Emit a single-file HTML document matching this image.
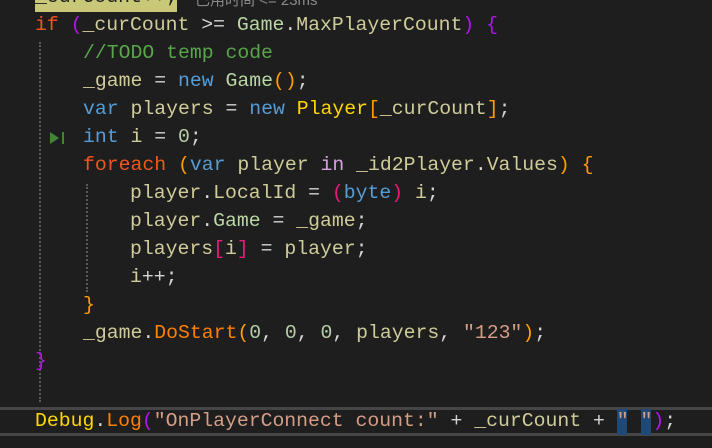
<!DOCTYPE html>
<html><head><meta charset="utf-8"><style>
html,body{margin:0;padding:0;background:#1e1e1e;width:712px;height:448px;overflow:hidden;position:relative}
.l{position:absolute;white-space:pre;font-family:"Liberation Mono",monospace;font-size:19.8px;line-height:28px;height:28px;color:#dcdcaa}
.id{color:#d0cc9a}.kw{color:#569cd6}.ctl{color:#f2551d}.ty{color:#b8d7a3}.cm{color:#57a64a}
.num{color:#b5cea8}.str{color:#d69d85}.cls{color:#ffd700}.fn{color:#ff8000}.pu{color:#b116e6}.or{color:#ff9d00}.pk{color:#e81a7a}.op{color:#d4d4d4}.pl{color:#d7a0e0}
.g{position:absolute;width:0;border-left:2px dotted #5a5a5a}
</style></head><body>
<div style="position:absolute;left:35px;top:0;width:142px;height:12px;background:#c8c878;overflow:hidden"><div class="l" style="left:0;top:-17px;color:#1e1e1e">_curCount++;</div></div>
<div style="position:absolute;left:195px;top:0;height:11px;width:140px;overflow:hidden"><div style="position:absolute;top:-11px;left:0;font-family:'Liberation Sans','Noto Sans CJK SC',sans-serif;font-size:15px;color:#8a8a8a;white-space:pre">已用时间 &lt;= 23ms</div></div>

<div class="g" style="left:39px;top:42px;height:360px"></div>
<div class="g" style="left:86px;top:184px;height:108px"></div>

<div class="l" style="left:35px;top:11px"><span class="ctl">if</span> <span class="pu">(</span><span class="id">_curCount</span> <span class="op">&gt;=</span> <span class="ty">Game</span><span class="op">.</span><span class="id">MaxPlayerCount</span><span class="pu">)</span> <span class="pu">{</span></div>
<div class="l" style="left:83px;top:39px"><span class="cm">//TODO temp code</span></div>
<div class="l" style="left:83px;top:67px"><span class="id">_game</span> <span class="op">=</span> <span class="kw">new</span> <span class="ty">Game</span><span class="or">()</span><span class="op">;</span></div>
<div class="l" style="left:83px;top:95px"><span class="kw">var</span> <span class="id">players</span> <span class="op">=</span> <span class="kw">new</span> <span class="cls">Player</span><span class="or">[</span><span class="id">_curCount</span><span class="or">]</span><span class="op">;</span></div>
<svg style="position:absolute;left:48px;top:130px" width="18" height="16"><polygon points="2,2 11,8 2,14" fill="#3d8a2c"/><rect x="14" y="2" width="2" height="12" fill="#3d8a2c"/></svg>
<div class="l" style="left:83px;top:123px"><span class="kw">int</span> <span class="id">i</span> <span class="op">=</span> <span class="num">0</span><span class="op">;</span></div>
<div class="l" style="left:83px;top:151px"><span class="ctl">foreach</span> <span class="or">(</span><span class="kw">var</span> <span class="id">player</span> <span class="pl">in</span> <span class="id">_id2Player</span><span class="op">.</span><span class="id">Values</span><span class="or">)</span> <span class="or">{</span></div>
<div class="l" style="left:130px;top:179px"><span class="id">player</span><span class="op">.</span><span class="id">LocalId</span> <span class="op">=</span> <span class="pk">(</span><span class="kw">byte</span><span class="pk">)</span> <span class="id">i</span><span class="op">;</span></div>
<div class="l" style="left:130px;top:207px"><span class="id">player</span><span class="op">.</span><span class="ty">Game</span> <span class="op">=</span> <span class="id">_game</span><span class="op">;</span></div>
<div class="l" style="left:130px;top:235px"><span class="id">players</span><span class="pk">[</span><span class="id">i</span><span class="pk">]</span> <span class="op">=</span> <span class="id">player</span><span class="op">;</span></div>
<div class="l" style="left:130px;top:263px"><span class="id">i</span><span class="op">++;</span></div>
<div class="l" style="left:83px;top:291px"><span class="or">}</span></div>
<div class="l" style="left:83px;top:319px"><span class="id">_game</span><span class="op">.</span><span class="fn">DoStart</span><span class="or">(</span><span class="num">0</span><span class="op">, </span><span class="num">0</span><span class="op">, </span><span class="num">0</span><span class="op">, </span><span class="id">players</span><span class="op">, </span><span class="str">"123"</span><span class="or">)</span><span class="op">;</span></div>
<div class="l" style="left:35px;top:347px"><span class="pu">}</span></div>

<div style="position:absolute;left:0;top:407px;width:712px;height:3px;background:#464646"></div>
<div style="position:absolute;left:0;top:433px;width:712px;height:3px;background:#464646"></div>
<div style="position:absolute;left:617px;top:409px;width:10px;height:26px;background:#1f4a78"></div>
<div style="position:absolute;left:641px;top:409px;width:10px;height:26px;background:#1f4a78"></div>
<div class="l" style="left:35px;top:407px"><span class="cls">Debug</span><span class="op">.</span><span class="fn">Log</span><span class="pu">(</span><span class="str">"OnPlayerConnect count:"</span> <span class="op">+</span> <span class="id">_curCount</span> <span class="op">+</span> <span class="str">" "</span><span class="pu">)</span><span class="op">;</span></div>
</body></html>
